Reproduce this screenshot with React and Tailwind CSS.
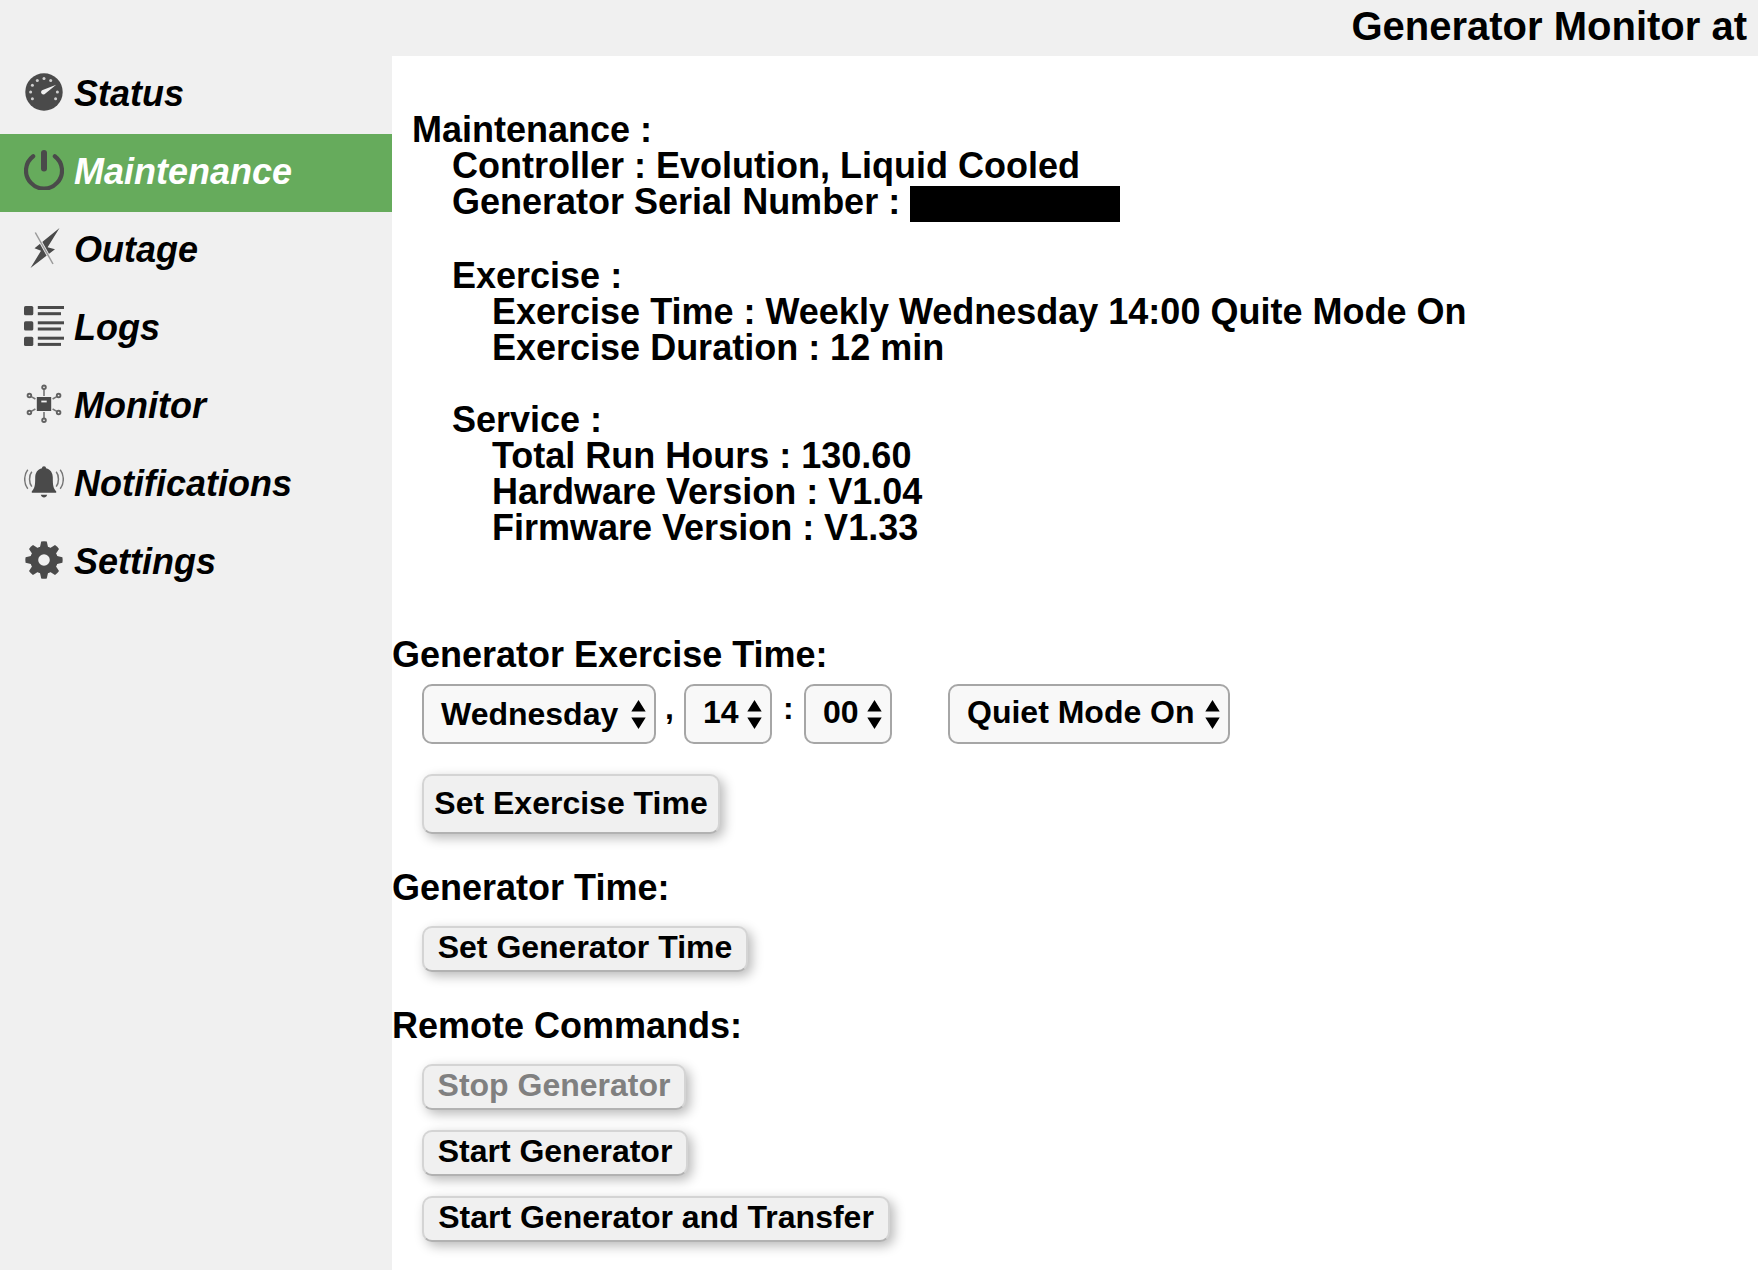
const INK = "#4a4a4a";

function GaugeIcon() {
  const dots = [-120, -90, -60, -30, 0, 30, 90, 120];
  return (
    <svg className="size-10 shrink-0" viewBox="0 0 40 40">
      <circle cx="20" cy="20" r="18.7" fill={INK} />
      {dots.map((d) => {
        const a = (d * Math.PI) / 180;
        return (
          <circle key={d} cx={20 + 13.4 * Math.sin(a)} cy={20 - 13.4 * Math.cos(a)} r="1.5" fill="#d0d0d0" />
        );
      })}
      <path d="M18.7 17.9 L32.2 12.8 L21.4 21.6 A2.4 2.4 0 1 1 18.7 17.9 Z" fill="#f0f0f0" />
    </svg>
  );
}

function PowerIcon() {
  return (
    <svg className="size-10 shrink-0" viewBox="0 0 40 40" fill="none" stroke={INK} strokeLinecap="round">
      <path d="M9.2 6.2 A18 18 0 1 0 30.8 6.2" strokeWidth="4.2" />
      <path d="M20 3 V18.6" strokeWidth="6" />
    </svg>
  );
}

function BoltIcon() {
  return (
    <svg className="size-10 shrink-0" viewBox="0 0 40 40">
      <path d="M35.5 0 L23.6 19.3 L31 21.2 L6.5 40 L17 22.8 L10.5 20.2 Z" fill={INK} />
      <path d="M11.3 4.5 L29 36" stroke="#f0f0f0" strokeWidth="3" />
      <path d="M11.3 4.5 L29 36" stroke="#9a9a9a" strokeWidth="1.5" />
    </svg>
  );
}

function ListIcon() {
  return (
    <svg className="size-10 shrink-0" viewBox="0 0 40 40" fill={INK}>
      {[0, 15.3, 30.7].map((y) => (
        <g key={y}>
          <rect x="0" y={y} width="9.3" height="9.3" rx="1.6" />
          <rect x="13.8" y={y} width="26.2" height="3" />
          <rect x="13.8" y={y + 6.2} width="23.2" height="3" />
        </g>
      ))}
    </svg>
  );
}

function HubIcon() {
  return (
    <svg className="size-10 shrink-0" viewBox="0 0 40 40" fill="none" stroke="#757575" strokeWidth="1.6">
      <rect x="12.8" y="13" width="14.4" height="14" fill={INK} stroke="none" />
      <rect x="17.3" y="16.6" width="5.4" height="1.8" fill="#f0f0f0" stroke="none" />
      <path d="M20 4.6 V12 M20 28 V35.4 M7.2 12.6 L11.4 15 M32.8 12.6 L28.6 15 M7.2 27.4 L11.4 25 M32.8 27.4 L28.6 25" />
      <g strokeWidth="1.9" stroke="#626262">
        <circle cx="20" cy="3.3" r="1.8" />
        <circle cx="20" cy="36.2" r="1.8" />
        <circle cx="5.4" cy="11.5" r="1.8" />
        <circle cx="34.6" cy="11.5" r="1.8" />
        <circle cx="5.4" cy="28.5" r="1.8" />
        <circle cx="34.6" cy="28.5" r="1.8" />
      </g>
    </svg>
  );
}

function BellIcon() {
  return (
    <svg className="size-10 shrink-0" viewBox="0 0 40 40">
      <path
        d="M20 4.2 C21.3 4.2 22 5 22 6.2 C26.6 7.2 28.8 11 28.8 15.5 C28.8 23.5 29.3 26.6 32.2 29.2 V30.8 H7.8 V29.2 C10.7 26.6 11.2 23.5 11.2 15.5 C11.2 11 13.4 7.2 18 6.2 C18 5 18.7 4.2 20 4.2 Z"
        fill={INK}
      />
      <path d="M16.8 32.8 H23.2 C22.6 34.6 21.5 35.4 20 35.4 C18.5 35.4 17.4 34.6 16.8 32.8 Z" fill={INK} />
      <g fill="none" stroke="#757575" strokeWidth="1.5">
        <path d="M7.8 9.8 C4.8 13.5 4.8 20.8 7.8 24.6" />
        <path d="M3.8 7.8 C-0.3 12.8 -0.3 21.8 3.8 26.8" />
        <path d="M32.2 9.8 C35.2 13.5 35.2 20.8 32.2 24.6" />
        <path d="M36.2 7.8 C40.3 12.8 40.3 21.8 36.2 26.8" />
      </g>
    </svg>
  );
}

function GearIcon() {
  return (
    <svg className="size-10 shrink-0" viewBox="0 0 40 40">
      <g fill={INK}>
        {[0, 45, 90, 135, 180, 225, 270, 315].map((d) => (
          <path key={d} transform={`rotate(${d} 20 20)`} d="M15.6 9 L17.2 1.6 Q20 1 22.8 1.6 L24.4 9 Z" />
        ))}
      </g>
      <circle cx="20" cy="20" r="9.8" fill="none" stroke={INK} strokeWidth="8" />
    </svg>
  );
}

const NAV = [
  { label: "Status", Icon: GaugeIcon },
  { label: "Maintenance", Icon: PowerIcon, active: true },
  { label: "Outage", Icon: BoltIcon },
  { label: "Logs", Icon: ListIcon },
  { label: "Monitor", Icon: HubIcon },
  { label: "Notifications", Icon: BellIcon },
  { label: "Settings", Icon: GearIcon },
];

function Select({ children, className = "", textClass = "pb-1" }) {
  return (
    <button
      className={`flex h-[60px] items-center justify-between rounded-[10px] border-2 border-[#a6a6a6] bg-[#f8f8f8] pl-[17px] pr-2 text-[32px] leading-9 ${className}`}
    >
      <span className={textClass}>{children}</span>
      <svg className="h-[29px] w-[15px]" viewBox="0 0 15 29">
        <path d="M7.5 0 L14.7 11.6 H0.3 Z M7.5 29 L14.7 17.4 H0.3 Z" />
      </svg>
    </button>
  );
}

function Button({ children, className = "", size = "h-[46px] pb-1" }) {
  return (
    <button
      className={`flex items-center justify-center rounded-[10px] border-2 border-[#d4d4d4] border-b-[#b2b2b2] bg-[#f0f0f0] text-[32px] leading-9 shadow-[4px_4px_12px_rgba(0,0,0,0.28)] ${size} ${className}`}
    >
      {children}
    </button>
  );
}

export default function App() {
  return (
    <div className="flex h-[1270px] w-[1758px] flex-col overflow-hidden bg-white font-['Liberation_Sans',Arial,sans-serif] font-bold whitespace-nowrap text-black">
      <header className="flex h-14 shrink-0 justify-end bg-[#f0f0f0] pr-[11px] text-[40px] leading-[52px]">
        Generator Monitor at
      </header>
      <div className="flex flex-1">
        <nav className="w-[392px] shrink-0 bg-[#f0f0f0] text-[36px] italic">
          {NAV.map(({ label, Icon, active }) => (
            <div
              key={label}
              className={`flex h-[78px] gap-2.5 pl-6 pt-4 ${active ? "bg-[#66ab5c] text-white" : ""}`}
            >
              <Icon />
              <span className="leading-[43px]">{label}</span>
            </div>
          ))}
        </nav>
        <main className="flex-1 text-[36px] leading-9">
          <section className="pl-5 pt-14">
            <p>Maintenance :</p>
            <div className="pl-10">
              <p>Controller : Evolution, Liquid Cooled</p>
              <p className="flex gap-2.5">
                Generator Serial Number :
                <span className="mt-0.5 h-9 w-[210px] bg-black" />
              </p>
            </div>
            <div className="mt-9 pl-10">
              <p>Exercise :</p>
              <div className="pl-10">
                <p>Exercise Time : Weekly Wednesday 14:00 Quite Mode On</p>
                <p>Exercise Duration : 12 min</p>
              </div>
            </div>
            <div className="mt-9 pl-10">
              <p>Service :</p>
              <div className="pl-10">
                <p>Total Run Hours : 130.60</p>
                <p>Hardware Version : V1.04</p>
                <p>Firmware Version : V1.33</p>
              </div>
            </div>
          </section>

          <h2 className="mt-[91px]">Generator Exercise Time:</h2>
          <div className="mt-[11px] flex pl-[30px] text-[32px]">
            <Select className="w-[234px]" textClass="pt-0">Wednesday</Select>
            <span className="w-7 pl-[9px] pt-1.5">,</span>
            <Select className="w-[88px]">14</Select>
            <span className="w-8 pl-[11px] pt-1.5">:</span>
            <Select className="w-[88px]">00</Select>
            <Select className="ml-14 w-[282px]">Quiet Mode On</Select>
          </div>
          <div className="mt-[30px] pl-[30px]">
            <Button size="h-[60px] pb-0.5" className="w-[298px]">Set Exercise Time</Button>
          </div>

          <h2 className="mt-9">Generator Time:</h2>
          <div className="mt-5 pl-[30px]">
            <Button className="w-[326px]">Set Generator Time</Button>
          </div>

          <h2 className="mt-9">Remote Commands:</h2>
          <div className="mt-5 flex flex-col gap-5 pl-[30px]">
            <Button className="w-[264px] text-[#808080]">Stop Generator</Button>
            <Button className="w-[266px]">Start Generator</Button>
            <Button className="w-[468px]">Start Generator and Transfer</Button>
          </div>
        </main>
      </div>
    </div>
  );
}
